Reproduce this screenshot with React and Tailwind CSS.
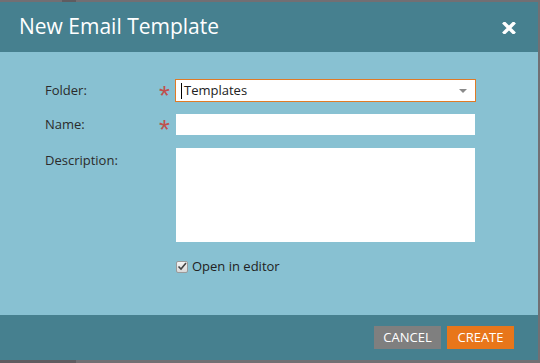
export default function App() {
  const font = { fontFamily: '"Open Sans", "Noto Sans", sans-serif' };
  const star = { fontFamily: '"Liberation Sans", sans-serif' };
  return (
    <div className="w-[540px] h-[363px] flex flex-col bg-[#726f73]" style={font}>
      {/* top border */}
      <div className="h-[2px] flex shrink-0">
        <div className="w-[62px] bg-[#726f73]" />
        <div className="w-[14px] bg-[#5f5c60]" />
        <div className="flex-1 bg-[#726f73]" />
      </div>
      <div className="flex-1 flex flex-col w-[538px]">
        {/* header */}
        <div className="h-[50px] shrink-0 bg-[#46808f] flex items-center justify-between pl-[19px] pr-[22px]">
          <span className="text-white text-[21px] leading-none pb-[1px]">New Email Template</span>
          <svg width="14" height="12" viewBox="0 0 14 12" className="mt-[2px]">
            <path d="M2.5 1.5 L11.5 10.5 M11.5 1.5 L2.5 10.5" stroke="white" strokeWidth="3.4" strokeLinecap="square" />
          </svg>
        </div>
        {/* body */}
        <div className="h-[263px] shrink-0 bg-[#88c1d2] pt-[27px] pl-[45px] text-[13px] text-[#2b2b2b]">
          {/* folder */}
          <div className="flex items-center h-[23px]">
            <span className="w-[114px]">Folder:</span>
            <span className="w-[16px] h-[23px] text-[#c0504d] text-[28px] leading-none pt-[3px] overflow-visible" style={star}>*</span>
            <div className="w-[301px] h-[23px] bg-white border border-[#e07a26] flex items-center pl-[5px] pr-[8px] relative">
              <span className="w-px h-[16px] bg-black mr-[2px]" />
              <span className="flex-1 text-[#222]">Templates</span>
              <svg width="8" height="4" viewBox="0 0 8 4"><path d="M0 0 L8 0 L4 4 Z" fill="#8a8a8a" /></svg>
            </div>
          </div>
          {/* name */}
          <div className="flex items-center h-[21px] mt-[12px]">
            <span className="w-[114px]">Name:</span>
            <span className="w-[17px] h-[21px] text-[#c0504d] text-[28px] leading-none pt-[2px] overflow-visible" style={star}>*</span>
            <div className="w-[299px] h-[21px] bg-white" />
          </div>
          {/* description */}
          <div className="flex items-start mt-[13px]">
            <span className="w-[131px] pt-[3px]">Description:</span>
            <div className="w-[299px] h-[94px] bg-white" />
          </div>
          {/* checkbox */}
          <div className="flex items-center mt-[15px] ml-[131px]">
            <span className="w-[12px] h-[12px] border border-[#9a9a9a] bg-gradient-to-b from-[#f4f4f4] to-[#d8d8d8] rounded-[2px] flex items-center justify-center">
              <svg width="10" height="9" viewBox="0 0 10 9">
                <path d="M1.5 4.5 L4 7 L9 1" stroke="#444" strokeWidth="1.6" fill="none" />
              </svg>
            </span>
            <span className="ml-[4px] text-[#222]">Open in editor</span>
          </div>
        </div>
        {/* footer */}
        <div className="h-[45px] shrink-0 bg-[#46808f] flex justify-end items-start pt-[11px] pr-[24px] gap-[6px]">
          <div className="w-[67px] h-[23px] bg-[#7f7f7f] text-white text-[13px] flex items-center justify-center">CANCEL</div>
          <div className="w-[67px] h-[23px] bg-[#e8761a] text-white text-[13px] flex items-center justify-center">CREATE</div>
        </div>
      </div>
      {/* bottom border */}
      <div className="h-[3px] flex shrink-0">
        <div className="w-[76px] bg-[#5f5c60]" />
        <div className="flex-1 bg-[#726f73]" />
      </div>
    </div>
  );
}
